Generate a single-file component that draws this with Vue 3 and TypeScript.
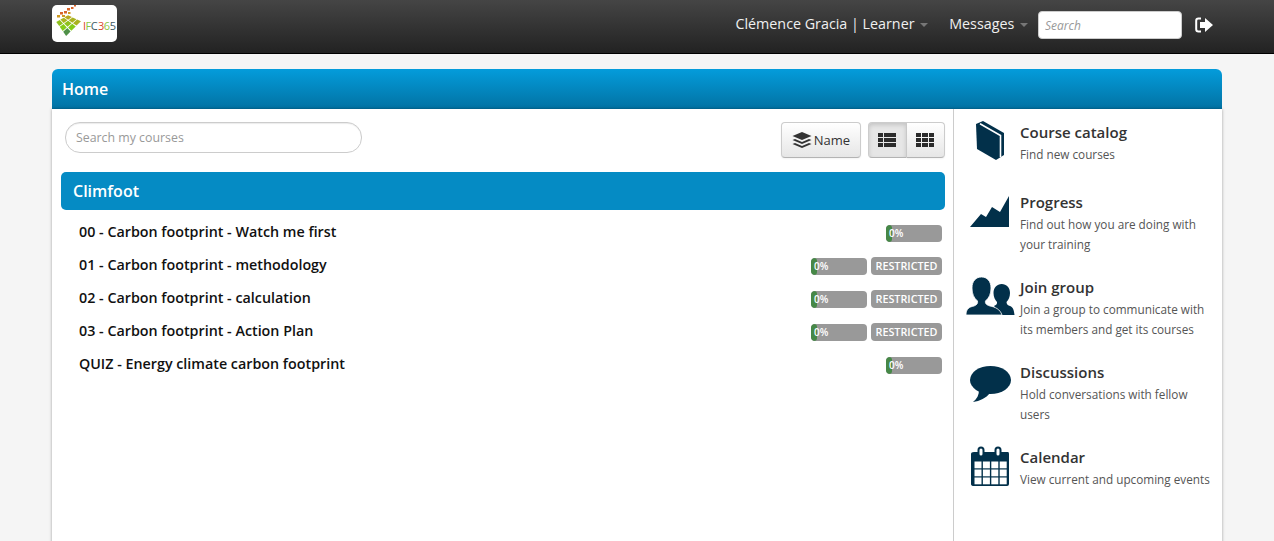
<script setup lang="ts">
// Learner home page: nav bar, course list and quick links
interface Course {
  name: string;
  progress: number;
  restricted: boolean;
}

interface QuickLink {
  id: string;
  title: string;
  text: string;
}

const courses: Course[] = [
  { name: "00 - Carbon footprint - Watch me first", progress: 0, restricted: false },
  { name: "01 - Carbon footprint - methodology", progress: 0, restricted: true },
  { name: "02 - Carbon footprint - calculation", progress: 0, restricted: true },
  { name: "03 - Carbon footprint - Action Plan", progress: 0, restricted: true },
  { name: "QUIZ - Energy climate carbon footprint", progress: 0, restricted: false }
];

const links: QuickLink[] = [
  { id: "catalog", title: "Course catalog", text: "Find new courses" },
  { id: "progress", title: "Progress", text: "Find out how you are doing with your training" },
  { id: "group", title: "Join group", text: "Join a group to communicate with its members and get its courses" },
  { id: "discuss", title: "Discussions", text: "Hold conversations with fellow users" },
  { id: "calendar", title: "Calendar", text: "View current and upcoming events" }
];

// Logo: 3x3 tiles laid out on a kite shape
const kite = { l: [3.7, 16.7], t: [16, 10], r: [29.7, 16], b: [14, 31.7] };

function kitePoint(s: number, t: number): number[] {
  return [0, 1].map(
    (k) =>
      (1 - s) * (1 - t) * kite.l[k] +
      s * (1 - t) * kite.t[k] +
      s * t * kite.r[k] +
      (1 - s) * t * kite.b[k]
  );
}

const tileColors = ["#b8a81e", "#a9b31f", "#8fc01c", "#84cb18", "#6fc21f", "#4f9048"];

const logoTiles: { points: string; fill: string }[] = [];
for (let i = 0; i < 3; i++) {
  for (let j = 0; j < 3; j++) {
    const a = 0.025;
    const corners = [
      kitePoint(i / 3 + a, j / 3 + a),
      kitePoint((i + 1) / 3 - a, j / 3 + a),
      kitePoint((i + 1) / 3 - a, (j + 1) / 3 - a),
      kitePoint(i / 3 + a, (j + 1) / 3 - a)
    ];
    const midY = corners.reduce((sum, c) => sum + c[1], 0) / 4;
    const idx = Math.min(5, Math.max(0, Math.floor((midY - 12) / 2.8)));
    logoTiles.push({ points: corners.map((c) => c.join(",")).join(" "), fill: tileColors[idx] });
  }
}
</script>

<template>
  <div class="page">
    <header class="navbar">
      <div class="logo">
        <svg class="logo-mark" width="31" height="37" viewBox="0 0 31 37">
          <g fill="#d9642a">
            <rect x="22" y="0" width="2" height="1.500" />
            <rect x="19" y="2" width="2.500" height="2" />
            <rect x="15" y="3" width="3" height="2.500" />
            <rect x="12" y="6" width="3" height="2.500" />
            <rect x="8" y="7" width="3" height="2.500" />
          </g>
          <g fill="#cf9a20">
            <rect x="16" y="7" width="2.500" height="2" />
            <rect x="5" y="10" width="3" height="2.500" />
            <rect x="10" y="10" width="3" height="2" />
          </g>
          <polygon v-for="tile in logoTiles" :key="tile.points" :points="tile.points" :fill="tile.fill" />
        </svg>
        <span class="logo-text"><i class="c1">I</i><i class="c2">F</i><i class="c3">C</i> <i class="c1">3</i><i class="c2">6</i><i class="c3">5</i></span>
      </div>
      <nav class="nav-right">
        <a class="nav-link">Clémence Gracia | Learner <b class="caret"></b></a>
        <a class="nav-link">Messages <b class="caret"></b></a>
        <input class="nav-search" type="text" placeholder="Search" />
        <svg class="logout" width="18" height="16" viewBox="0 0 18 16">
          <path d="M6 1.500H3.500Q1.200 1.500 1.200 3.800V12.200Q1.200 14.500 3.500 14.500H6" fill="none" stroke="#fff" stroke-width="2" />
          <path d="M5 5H10V1L18 8L10 15V11H5Z" fill="#fff" />
        </svg>
      </nav>
    </header>

    <main class="panel">
      <div class="panel-head">Home</div>
      <div class="panel-body">
        <section class="main-col">
          <div class="toolbar">
            <input class="course-search" type="text" placeholder="Search my courses" />
            <div class="tools">
              <button class="btn btn-name">
                <svg width="20" height="16" viewBox="0 0 20 16">
                  <path d="M10 0L19.500 4L10 8L.5 4Z" fill="#333" />
                  <path d="M3 7L.5 8L10 12L19.500 8L17 7L10 10Z" fill="#333" />
                  <path d="M3 11L.5 12L10 16L19.500 12L17 11L10 14Z" fill="#333" />
                </svg>
                Name
              </button>
              <div class="btn-group">
                <button class="btn btn-view active">
                  <svg width="18" height="14" viewBox="0 0 18 14">
                    <path d="M0 0H5V4H0ZM6 0H18V4H6ZM0 5H5V9H0ZM6 5H18V9H6ZM0 10H5V14H0ZM6 10H18V14H6Z" fill="#2b2b2b" />
                  </svg>
                </button>
                <button class="btn btn-view">
                  <svg width="18" height="14" viewBox="0 0 18 14">
                    <path d="M0 0H5V4H0ZM6 0H12V4H6ZM13 0H18V4H13ZM0 5H5V9H0ZM6 5H12V9H6ZM13 5H18V9H13ZM0 10H5V14H0ZM6 10H12V14H6ZM13 10H18V14H13Z" fill="#2b2b2b" />
                  </svg>
                </button>
              </div>
            </div>
          </div>

          <h2 class="category">Climfoot</h2>
          <ul class="courses">
            <li v-for="course in courses" :key="course.name" class="course">
              <span class="course-name">{{ course.name }}</span>
              <div class="progress">
                <div class="progress-bar"></div>
                <span class="progress-text">{{ course.progress }}%</span>
              </div>
              <span v-if="course.restricted" class="tag">RESTRICTED</span>
            </li>
          </ul>
        </section>

        <aside class="side-col">
          <a v-for="link in links" :key="link.id" class="side-link">
            <svg class="side-icon" width="50" height="44" viewBox="0 0 50 44">
              <g v-if="link.id === 'catalog'">
                <path d="M10 4L17 1L38 13V35L30 40L11 29Z" fill="#02304a" />
                <path d="M14 3.800L34.500 15.500V37" fill="none" stroke="#fff" stroke-width="1.600" />
              </g>
              <path v-else-if="link.id === 'progress'" d="M4 37L15 24L20 27L26 17L34 22L43 6V37Z" fill="#02304a" />
              <g v-else-if="link.id === 'group'">
                <path d="M28 31C30 30 31.500 29 31 27C29 25 27.500 22 27.500 18C27.500 12.500 31 9 35.700 9C40.500 9 44 12.500 44 18C44 22 42.500 25 40.500 27C40.500 29.500 42 30.500 44 31C47 32 48 35 48.500 40H34Z" fill="#02304a" />
                <path d="M0 40C0 34 3 32 8 31C11 30 12 28 11.500 26C8 23 6 19 6 13C6 6 10 2 15.500 2C21 2 25 6 25 13C25 19 23 23 19.500 26C19 28 20 30 24 31C29 32 34 34 36 40Z" fill="#02304a" stroke="#fff" stroke-width=".8" />
              </g>
              <g v-else-if="link.id === 'discuss'">
                <ellipse cx="24.500" cy="20" rx="20.500" ry="14" fill="#02304a" />
                <path d="M13 30C13 35 11 39 7 42C14 41 20 38 24 33Z" fill="#02304a" />
              </g>
              <g v-else>
                <path d="M8 7H42Q43 7 43 9V39Q43 41 41 41H8Q5 41 5 39V9Q5 7 8 7Z" fill="#02304a" />
                <rect x="12.500" y="2.500" width="5" height="9" rx="2.500" fill="#fff" stroke="#02304a" stroke-width="2" />
                <rect x="29.500" y="2.500" width="5" height="9" rx="2.500" fill="#fff" stroke="#02304a" stroke-width="2" />
                <g fill="#fff">
                  <template v-for="r in [0, 1, 2]" :key="r">
                    <rect v-for="c in [0, 1, 2, 3]" :key="c" :x="8.500 + c * 8.400" :y="16.500 + r * 8" width="7" height="6.800" />
                  </template>
                </g>
              </g>
            </svg>
            <div class="side-text">
              <div class="side-title">{{ link.title }}</div>
              <div class="side-desc">{{ link.text }}</div>
            </div>
          </a>
        </aside>
      </div>
    </main>
  </div>
</template>

<style>
html,
body {
  margin: 0;
  height: 100%;
  overflow: hidden;
  background: #f5f5f5;
}
</style>

<style scoped>
.page {
  font-family: "Open Sans", "Noto Sans", sans-serif;
  color: #333;
  height: 541px;
  overflow: hidden;
}

/* ナビバー */
.navbar {
  height: 53px;
  display: flex;
  align-items: flex-start;
  justify-content: space-between;
  padding: 0 61px 0 52px;
  background: linear-gradient(to bottom, #454545, #222);
  border-bottom: 1px solid #000;
}

.logo {
  width: 65px;
  height: 37px;
  margin-top: 5px;
  background: #fff;
  border-radius: 5px;
  display: flex;
  align-items: center;
  white-space: nowrap;
}

.logo-mark {
  flex: none;
}

.logo-text {
  font-size: 11px;
  letter-spacing: -0.5px;
  word-spacing: -1.500px;
  margin-top: 3px;
}

.logo-text i {
  font-style: normal;
}

.c1 { color: #d9472b; }
.c2 { color: #8cc63f; }
.c3 { color: #3d5a63; }

.nav-right {
  display: flex;
  align-items: center;
  height: 50px;
}

.nav-link {
  color: #f0f0f0;
  font-size: 14.300px;
  margin: 0 21px 4px 0;
  white-space: nowrap;
}

.nav-link + .nav-link {
  margin-right: 10px;
}

.caret {
  display: inline-block;
  width: 0;
  height: 0;
  margin-left: 2px;
  vertical-align: middle;
  border-top: 4px solid #777;
  border-left: 4px solid transparent;
  border-right: 4px solid transparent;
}

.nav-search {
  box-sizing: border-box;
  width: 144px;
  height: 28px;
  margin: 0 13px 0 0;
  padding: 4px 6px;
  border: 1px solid #ccc;
  border-radius: 4px;
  background: #fff;
  font-family: inherit;
  font-size: 12px;
  font-style: italic;
  outline: none;
}

.nav-search::placeholder {
  color: #999;
}

.logout {
  flex: none;
}

/* パネル */
.panel {
  margin: 15px 52px 0;
}

.panel-head {
  height: 40px;
  box-sizing: border-box;
  padding-left: 10px;
  line-height: 40px;
  font-size: 16px;
  font-weight: 600;
  color: #fff;
  background: linear-gradient(to bottom, #049cdb, #0272a3);
  border-radius: 6px 6px 0 0;
}

.panel-body {
  display: flex;
  background: #fff;
  height: 460px;
  box-shadow: 0 0 3px rgba(0, 0, 0, 0.35);
}

.main-col {
  width: 902px;
  box-sizing: border-box;
  padding: 13px 8px 0 9px;
  border-right: 1px solid #ccc;
}

.toolbar {
  display: flex;
  justify-content: space-between;
  align-items: flex-start;
  padding-left: 4px;
}

.course-search {
  box-sizing: border-box;
  width: 297px;
  height: 31px;
  margin: 0;
  padding: 4px 10px;
  border: 1px solid #ccc;
  border-radius: 15px;
  font-family: inherit;
  font-size: 12.350px;
  outline: none;
  box-shadow: inset 0 1px 1px rgba(0, 0, 0, 0.08);
}

.course-search::placeholder {
  color: #999;
}

.tools {
  display: flex;
  gap: 7px;
}

.btn {
  box-sizing: border-box;
  height: 36px;
  margin: 0;
  border: 1px solid #ccc;
  border-bottom-color: #b3b3b3;
  border-radius: 4px;
  background: linear-gradient(to bottom, #fff, #e6e6e6);
  font-family: inherit;
  font-size: 13px;
  color: #333;
  display: flex;
  align-items: center;
  justify-content: center;
  box-shadow: 0 1px 2px rgba(0, 0, 0, 0.05);
}

.btn-name {
  width: 80px;
  gap: 2px;
  padding: 0;
}

.btn-group {
  display: flex;
}

.btn-view {
  width: 38.500px;
  padding: 0;
}

.btn-view:first-child {
  border-radius: 4px 0 0 4px;
}

.btn-view:last-child {
  border-radius: 0 4px 4px 0;
  border-left: 0;
}

.btn-view.active {
  background: #e6e6e6;
  box-shadow: inset 0 2px 4px rgba(0, 0, 0, 0.15);
}

.category {
  margin: 14px 0 0;
  height: 38px;
  padding-left: 12px;
  line-height: 38px;
  font-size: 16px;
  font-weight: 600;
  color: #fff;
  background: #058bc4;
  border-radius: 5px;
}

.courses {
  list-style: none;
  margin: 6px 0 0;
  padding: 0 3px 0 18px;
}

.course {
  display: flex;
  align-items: center;
  gap: 4px;
  height: 33px;
}

.course-name {
  flex: 1;
  font-size: 14.300px;
  font-weight: 600;
  color: #111;
  position: relative;
  top: -1px;
}

.progress {
  position: relative;
  width: 56px;
  height: 17px;
  margin-top: 2px;
  background: #999;
  border-radius: 4px;
  overflow: hidden;
}

.progress-bar {
  width: 6px;
  height: 100%;
  background: #468847;
  border-radius: 4px;
}

.progress-text {
  position: absolute;
  left: 3px;
  top: 0;
  font-size: 10px;
  line-height: 17px;
  font-weight: 600;
  color: #fff;
}

.tag {
  width: 71px;
  height: 18px;
  line-height: 18px;
  text-align: center;
  background: #999;
  border-radius: 4px;
  font-size: 10.800px;
  font-weight: 600;
  color: #fff;
}

/* サイドバー */
.side-col {
  flex: 1;
  padding: 13px 0 0 12px;
}

.side-link {
  display: flex;
  min-height: 47px;
  margin-bottom: 23px;
}

.side-icon {
  flex: none;
  margin: -2px 4px 0 0;
}

.side-title {
  font-size: 15px;
  line-height: 22px;
  font-weight: 600;
  color: #333;
  margin: -1px 0 1px;
}

.side-desc {
  font-size: 11.750px;
  line-height: 20px;
  color: #555;
  padding-right: 10px;
}
</style>
